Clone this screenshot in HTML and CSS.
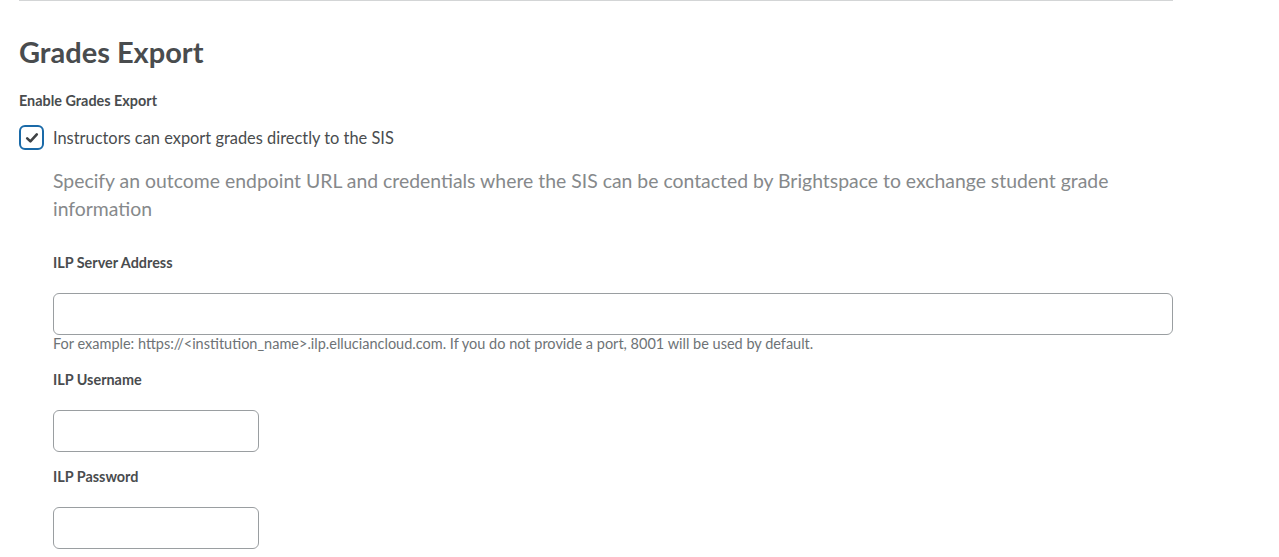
FILE: index.html
```html
<!DOCTYPE html>
<html lang="en">
<head>
<meta charset="utf-8">
<title>Grades Export</title>
<link rel="stylesheet" href="styles.css">
</head>
<body>
<div class="page">
  <hr class="divider">
  <h2 class="title">Grades Export</h2>
  <div class="section-label">Enable Grades Export</div>
  <label class="check-row">
    <span class="checkbox">
      <svg width="14" height="14" viewBox="0 0 14 14"><path d="M2.2 7.4 L5.4 10.4 L11.8 3.4" fill="none" stroke="#3f4244" stroke-width="2.6" stroke-linecap="round" stroke-linejoin="round"/></svg>
    </span>
    <span class="check-text">Instructors can export grades directly to the SIS</span>
  </label>
  <div class="nested">
    <p class="description">Specify an outcome endpoint URL and credentials where the SIS can be contacted by Brightspace to exchange student grade information</p>
    <div class="field field-first">
      <div class="field-label">ILP Server Address</div>
      <input class="input input-wide" type="text">
      <div class="help">For example: https://&lt;institution_name&gt;.ilp.elluciancloud.com. If you do not provide a port, 8001 will be used by default.</div>
    </div>
    <div class="field field-after-help">
      <div class="field-label">ILP Username</div>
      <input class="input input-small" type="text">
    </div>
    <div class="field field-after-input">
      <div class="field-label">ILP Password</div>
      <input class="input input-small" type="password">
    </div>
  </div>
</div>
</body>
</html>
```

FILE: styles.css
```css
html, body {
  margin: 0;
  padding: 0;
  background: #ffffff;
}
body {
  font-family: Lato, "Noto Sans", sans-serif;
  color: #494c4e;
}
.page {
  width: 1154px;
  margin-left: 19px;
}
.divider {
  margin: 0;
  border: 0;
  border-top: 1px solid #d3d5d6;
}
.title {
  margin: 33px 0 0 0;
  font-size: 29px;
  line-height: 36px;
  font-weight: 700;
  color: #494c4e;
}
.section-label {
  margin-top: 21px;
  font-size: 14.4px;
  line-height: 20px;
  font-weight: 700;
}
.check-row {
  margin-top: 14px;
  display: flex;
  align-items: center;
  gap: 9px;
}
.checkbox {
  box-sizing: border-box;
  width: 25px;
  height: 25px;
  border: 2px solid #1a6aa8;
  border-radius: 6px;
  display: flex;
  align-items: center;
  justify-content: center;
}
.check-text {
  font-size: 16.4px;
  line-height: 25px;
}
.nested {
  margin-left: 34px;
}
.description {
  margin: 17px 0 0 0;
  font-size: 19.4px;
  line-height: 28px;
  color: #86898b;
  width: 1090px;
}
.field {
  display: flex;
  flex-direction: column;
  align-items: flex-start;
}
.field-label {
  font-size: 14.4px;
  line-height: 20px;
  font-weight: 700;
  margin-bottom: 20px;
}
.field-first {
  margin-top: 30px;
}
.field-after-help {
  margin-top: 17px;
}
.field-after-input {
  margin-top: 15px;
}
.input {
  box-sizing: border-box;
  height: 42px;
  border: 1px solid #9a9ea1;
  border-radius: 6px;
  background: #fff;
  margin: 0;
  padding: 0 12px;
  font-family: inherit;
}
.input-wide {
  width: 1120px;
}
.input-small {
  width: 206px;
}
.help {
  font-size: 14.5px;
  line-height: 18px;
  color: #6e7376;
}
```
